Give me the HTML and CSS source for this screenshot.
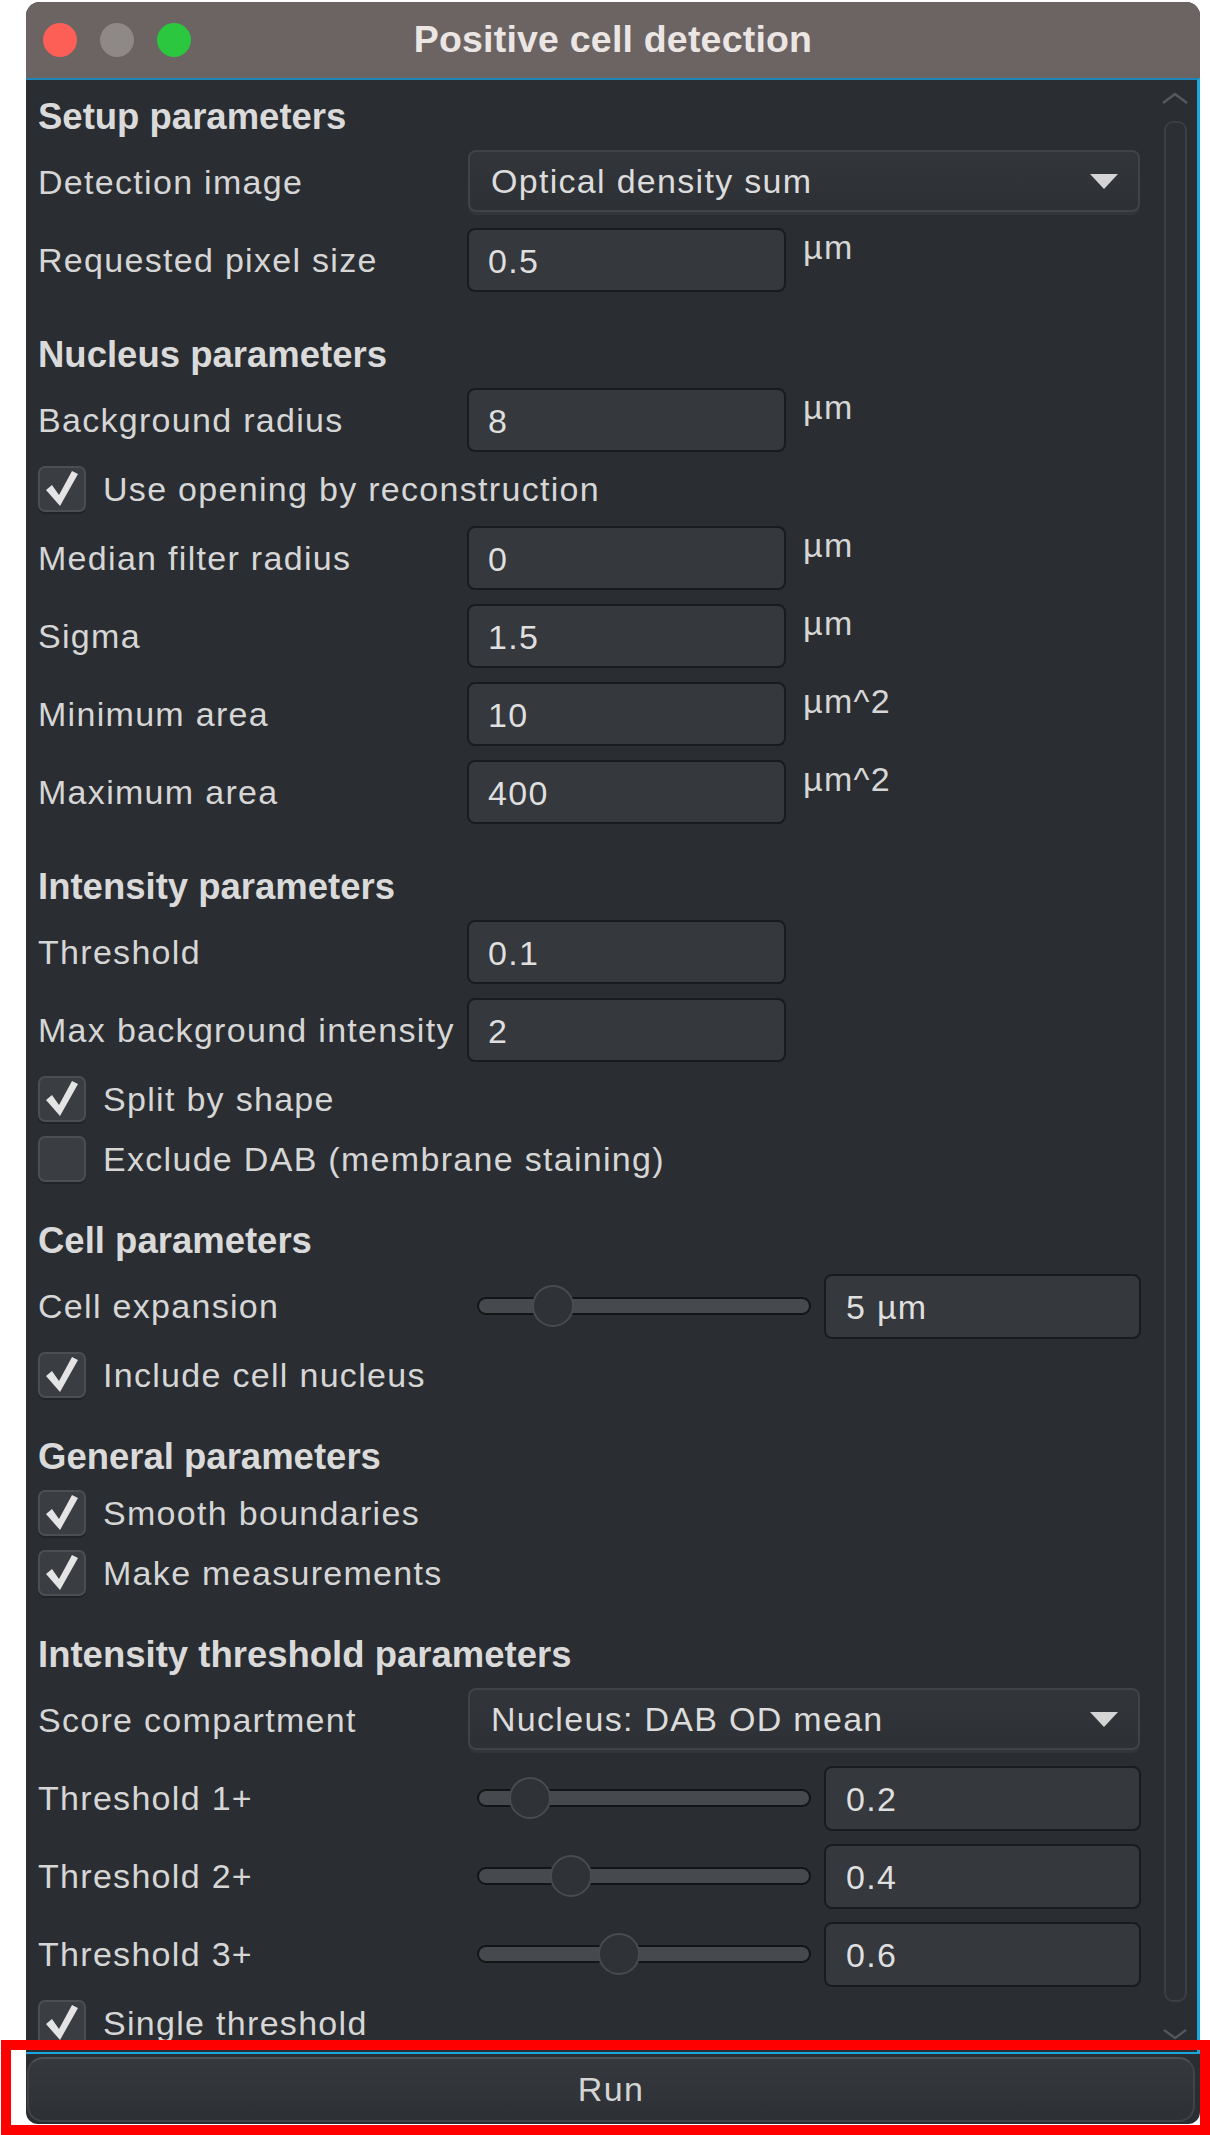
FILE: index.html
```html
<!DOCTYPE html>
<html lang="en">
<head>
<meta charset="utf-8">
<title>Positive cell detection</title>
<link rel="stylesheet" href="styles.css">
</head>
<body>
<div class="window">
  <div class="titlebar">
    <div class="lights">
      <span class="light red"></span>
      <span class="light gray"></span>
      <span class="light green"></span>
    </div>
    <div class="title">Positive cell detection</div>
    <div></div>
  </div>

  <div class="pane">
    <div class="content">
      <section class="section">
        <h2 class="heading">Setup parameters</h2>
        <div class="row">
          <span class="label">Detection image</span>
          <div class="combo"><span>Optical density sum</span><svg class="caret" viewBox="0 0 28 15"><polygon points="0,0 28,0 14,15"/></svg></div>
        </div>
        <div class="row">
          <span class="label">Requested pixel size</span>
          <div class="ctrl"><div class="field">0.5</div><span class="unit">µm</span></div>
        </div>
      </section>

      <section class="section">
        <h2 class="heading">Nucleus parameters</h2>
        <div class="row">
          <span class="label">Background radius</span>
          <div class="ctrl"><div class="field">8</div><span class="unit">µm</span></div>
        </div>
        <div class="check-row">
          <span class="check"><svg viewBox="0 0 44 42"><polygon points="6,22 12,17 19,27 32,3 38,6 20,38"/></svg></span>
          <span class="label">Use opening by reconstruction</span>
        </div>
        <div class="row">
          <span class="label">Median filter radius</span>
          <div class="ctrl"><div class="field">0</div><span class="unit">µm</span></div>
        </div>
        <div class="row">
          <span class="label">Sigma</span>
          <div class="ctrl"><div class="field">1.5</div><span class="unit">µm</span></div>
        </div>
        <div class="row">
          <span class="label">Minimum area</span>
          <div class="ctrl"><div class="field">10</div><span class="unit">µm^2</span></div>
        </div>
        <div class="row">
          <span class="label">Maximum area</span>
          <div class="ctrl"><div class="field">400</div><span class="unit">µm^2</span></div>
        </div>
      </section>

      <section class="section">
        <h2 class="heading">Intensity parameters</h2>
        <div class="row">
          <span class="label">Threshold</span>
          <div class="ctrl"><div class="field">0.1</div></div>
        </div>
        <div class="row">
          <span class="label">Max background intensity</span>
          <div class="ctrl"><div class="field">2</div></div>
        </div>
        <div class="check-row">
          <span class="check"><svg viewBox="0 0 44 42"><polygon points="6,22 12,17 19,27 32,3 38,6 20,38"/></svg></span>
          <span class="label">Split by shape</span>
        </div>
        <div class="check-row">
          <span class="check"></span>
          <span class="label">Exclude DAB (membrane staining)</span>
        </div>
      </section>

      <section class="section after-check">
        <h2 class="heading">Cell parameters</h2>
        <div class="row">
          <span class="label">Cell expansion</span>
          <div class="slider-ctrl">
            <div class="slider"><span class="knob" style="left:53px"></span></div>
            <div class="field value">5 µm</div>
          </div>
        </div>
        <div class="check-row">
          <span class="check"><svg viewBox="0 0 44 42"><polygon points="6,22 12,17 19,27 32,3 38,6 20,38"/></svg></span>
          <span class="label">Include cell nucleus</span>
        </div>
      </section>

      <section class="section after-check">
        <h2 class="heading">General parameters</h2>
        <div class="check-row">
          <span class="check"><svg viewBox="0 0 44 42"><polygon points="6,22 12,17 19,27 32,3 38,6 20,38"/></svg></span>
          <span class="label">Smooth boundaries</span>
        </div>
        <div class="check-row">
          <span class="check"><svg viewBox="0 0 44 42"><polygon points="6,22 12,17 19,27 32,3 38,6 20,38"/></svg></span>
          <span class="label">Make measurements</span>
        </div>
      </section>

      <section class="section after-check">
        <h2 class="heading">Intensity threshold parameters</h2>
        <div class="row">
          <span class="label">Score compartment</span>
          <div class="combo"><span>Nucleus: DAB OD mean</span><svg class="caret" viewBox="0 0 28 15"><polygon points="0,0 28,0 14,15"/></svg></div>
        </div>
        <div class="row">
          <span class="label">Threshold 1+</span>
          <div class="slider-ctrl">
            <div class="slider"><span class="knob" style="left:30px"></span></div>
            <div class="field value">0.2</div>
          </div>
        </div>
        <div class="row">
          <span class="label">Threshold 2+</span>
          <div class="slider-ctrl">
            <div class="slider"><span class="knob" style="left:71px"></span></div>
            <div class="field value">0.4</div>
          </div>
        </div>
        <div class="row">
          <span class="label">Threshold 3+</span>
          <div class="slider-ctrl">
            <div class="slider"><span class="knob" style="left:119px"></span></div>
            <div class="field value">0.6</div>
          </div>
        </div>
        <div class="check-row">
          <span class="check"><svg viewBox="0 0 44 42"><polygon points="6,22 12,17 19,27 32,3 38,6 20,38"/></svg></span>
          <span class="label">Single threshold</span>
        </div>
      </section>
    </div>

    <div class="scrollbar">
      <svg class="chev" viewBox="0 0 28 12"><polyline points="2,11 14,2 26,11"/></svg>
      <div class="vthumb"></div>
      <svg class="chev down" viewBox="0 0 28 12"><polyline points="2,1 14,10 26,1"/></svg>
    </div>
  </div>

  <div class="footer">
    <button class="run">Run</button>
  </div>
</div>
<div class="annotation"></div>
</body>
</html>
```

FILE: styles.css
```css
* {
  box-sizing: border-box;
}

html, body {
  margin: 0;
  background: #ffffff;
}

body {
  font-family: "Liberation Sans", Arial, sans-serif;
  padding-top: 2px;
}

.window {
  width: 1174px;
  margin-left: 26px;
  background: #2a2d31;
  border-radius: 14px 14px 12px 12px;
  overflow: hidden;
}

.titlebar {
  height: 76px;
  background: #6b6462;
  display: grid;
  grid-template-columns: 1fr auto 1fr;
  align-items: center;
}

.lights {
  display: flex;
  gap: 23px;
  padding-left: 17px;
}

.light {
  width: 34px;
  height: 34px;
  border-radius: 50%;
}

.light.red { background: #fd5f57; }
.light.gray { background: #8e8886; }
.light.green { background: #2ac73f; }

.title {
  color: #ebe6e4;
  font-weight: bold;
  font-size: 37.5px;
  letter-spacing: 0.2px;
  margin-top: -2px;
}

.pane {
  height: 1976px;
  border-top: 2px solid #1f86b8;
  border-right: 3px solid #1aa6df;
  border-bottom: 2px solid #1aa6df;
  display: flex;
  overflow: hidden;
}

.content {
  flex: 1;
  padding: 18px 12px 0 12px;
  display: flex;
  flex-direction: column;
  gap: 44px;
}

.section {
  display: flex;
  flex-direction: column;
  gap: 14px;
}

.section.after-check {
  margin-top: -4px;
}

.heading {
  margin: 0;
  height: 38px;
  line-height: 38px;
  font-size: 36.5px;
  font-weight: bold;
  color: #dadada;
  white-space: nowrap;
}

.label {
  font-size: 34px;
  letter-spacing: 1.3px;
  color: #d6d6d6;
  white-space: nowrap;
}

.row {
  display: grid;
  grid-template-columns: 429px 1fr;
  align-items: center;
  height: 64px;
}

.ctrl {
  display: flex;
  gap: 17px;
  height: 64px;
}

.field {
  width: 319px;
  height: 64px;
  background: #35383c;
  border: 2px solid #1a1b1e;
  border-radius: 8px;
  padding: 2px 0 0 19px;
  display: flex;
  align-items: center;
  color: #dfdfdf;
  font-size: 34px;
  letter-spacing: 1.3px;
}

.unit {
  align-self: flex-start;
  font-size: 34px;
  line-height: 38px;
  letter-spacing: 1.3px;
  color: #d6d6d6;
}

.combo {
  height: 62px;
  margin: 0 1px 2px 1px;
  border: 2px solid #404347;
  border-radius: 8px;
  background: linear-gradient(#323539, #2d3034);
  box-shadow: 0 3px 0 #323539;
  display: flex;
  align-items: center;
  justify-content: space-between;
  padding: 0 20px 0 21px;
  color: #dcdcdc;
  font-size: 34px;
  letter-spacing: 1.3px;
}

.caret {
  width: 28px;
  height: 15px;
  fill: #d4d4d4;
}

.check-row {
  display: flex;
  align-items: center;
  gap: 17px;
  height: 46px;
}

.check {
  width: 48px;
  height: 46px;
  flex: none;
  border-radius: 7px;
  background: #3a3d41;
  border: 2px solid #4b4e52;
  box-shadow: 0 2px 0 #222427;
  display: flex;
  align-items: center;
  justify-content: center;
}

.check svg {
  width: 44px;
  height: 42px;
  fill: #e4e4e4;
}

.slider-ctrl {
  display: flex;
  align-items: center;
  gap: 13px;
  height: 64px;
}

.slider {
  position: relative;
  flex: none;
  margin-left: 10px;
  width: 334px;
  height: 18px;
  background: #46494d;
  border: 2px solid #141517;
  border-radius: 9px;
}

.knob {
  position: absolute;
  top: 50%;
  width: 42px;
  height: 42px;
  margin-top: -21px;
  border-radius: 50%;
  background: #2f3236;
  border: 2px solid #484b4f;
}

.field.value {
  flex: 1;
  width: auto;
  height: 65px;
  padding-left: 20px;
}

.scrollbar {
  width: 44px;
  flex: none;
  display: flex;
  flex-direction: column;
  align-items: center;
  padding: 12px 0;
}

.chev {
  width: 28px;
  height: 12px;
  flex: none;
  fill: none;
  stroke: #55585c;
  stroke-width: 2.5;
}

.chev.down {
  height: 11px;
}

.vthumb {
  flex: 1;
  width: 23px;
  margin: 17px 0 27px;
  border: 2px solid #3b3e42;
  border-radius: 9px;
  background: #2c2f33;
}

.footer {
  padding: 3px 5px 2px 1px;
}

.run {
  display: block;
  width: 100%;
  height: 65px;
  border-radius: 16px;
  background: linear-gradient(#35383c, #2d3034);
  border: 2px solid #404347;
  border-top-color: #4d5054;
  color: #d4d4d4;
  font-family: "Liberation Sans", Arial, sans-serif;
  font-size: 34px;
  letter-spacing: 1.3px;
}

.annotation {
  position: absolute;
  left: 1px;
  top: 2040px;
  width: 1209px;
  height: 95px;
  border: 10px solid #ff0000;
  pointer-events: none;
}
```
